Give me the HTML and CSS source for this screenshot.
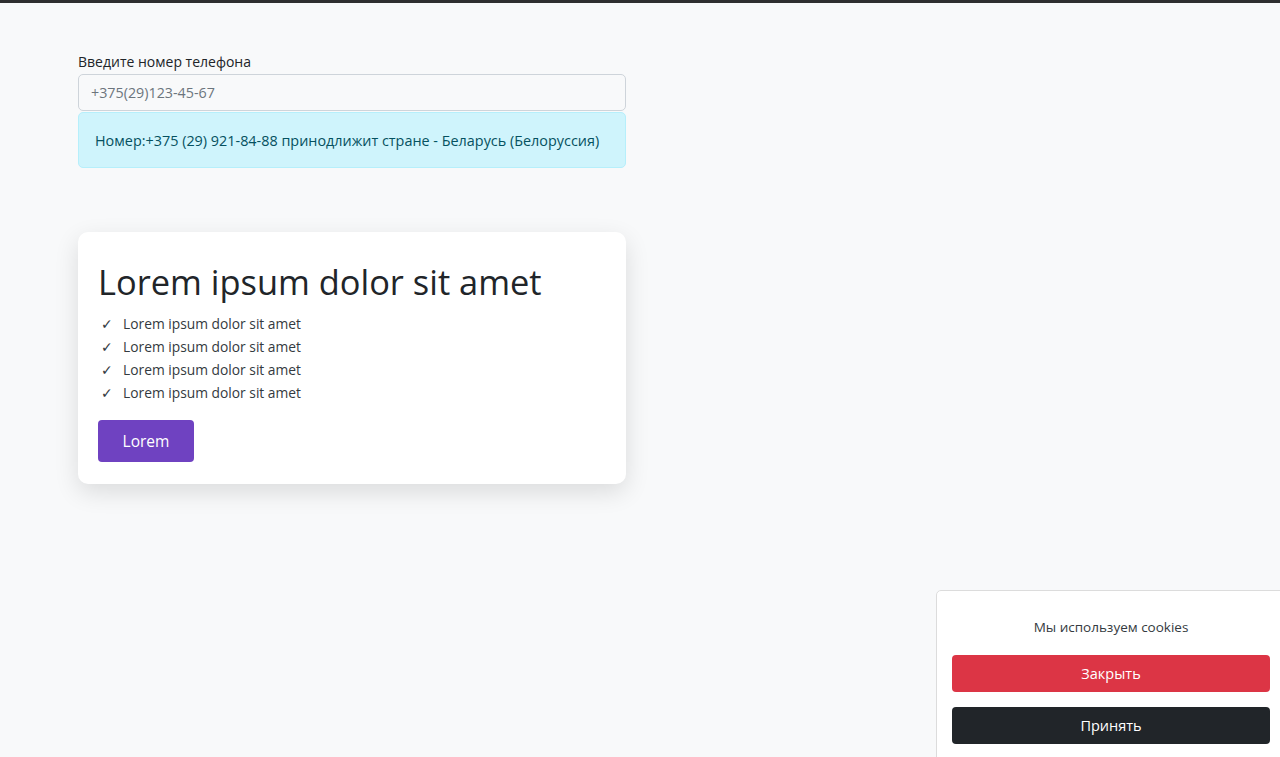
FILE: index.html
```html
<!DOCTYPE html>
<html lang="ru">
<head>
<meta charset="utf-8">
<title>Телефон</title>
<link rel="stylesheet" href="styles.css">
</head>
<body>
<div class="topbar"></div>
<main class="page">
  <section class="phone">
    <label class="label" for="phone">Введите номер телефона</label>
    <input id="phone" class="input" type="text" placeholder="+375(29)123-45-67">
    <div class="alert">Номер:+375 (29) 921-84-88 принодлижит стране - Беларусь (Белоруссия)</div>
  </section>
  <section class="card">
    <h1 class="title">Lorem ipsum dolor sit amet</h1>
    <ul class="list">
      <li><span class="check">✓</span>Lorem ipsum dolor sit amet</li>
      <li><span class="check">✓</span>Lorem ipsum dolor sit amet</li>
      <li><span class="check">✓</span>Lorem ipsum dolor sit amet</li>
      <li><span class="check">✓</span>Lorem ipsum dolor sit amet</li>
    </ul>
    <button class="btn btn-purple">Lorem</button>
  </section>
</main>
<div class="cookie">
  <p class="cookie-text">Мы используем cookies</p>
  <button class="btn btn-block btn-red">Закрыть</button>
  <button class="btn btn-block btn-dark">Принять</button>
</div>
</body>
</html>
```
FILE: styles.css
```css
* { box-sizing: border-box; }
html, body { height: 100%; }
body {
  margin: 0;
  background: #f8f9fa;
  font-family: "Open Sans", "Noto Sans", sans-serif;
  color: #212529;
  overflow: hidden;
}
.topbar { height: 3px; background: #2e2e30; }
.page { padding: 49px 0 0 78px; width: 626px; }
.phone { display: flex; flex-direction: column; }
.label { font-size: 14px; line-height: 20px; color: #212529; margin-bottom: 2px; }
.input {
  height: 37px;
  border: 1px solid #ced4da;
  border-radius: 5px;
  background: #f8f9fa;
  padding: 0 12px;
  font-family: inherit;
  font-size: 14.3px;
  color: #212529;
  outline: none;
}
.input::placeholder { color: #6c757d; }
.alert {
  margin-top: 1px;
  height: 56px;
  display: flex;
  align-items: center;
  padding: 0 16px;
  background: #cff4fc;
  border: 1px solid #b6effb;
  border-radius: 5px;
  color: #055160;
  font-size: 14.4px;
}
.card {
  margin-top: 64px;
  background: #fff;
  border-radius: 10px;
  box-shadow: 0 8px 24px rgba(0,0,0,0.12);
  padding: 28px 20px 22px;
}
.title { margin: 0 0 8px; font-weight: 400; font-size: 34.4px; line-height: 44px; color: #212529; }
.list { list-style: none; margin: 0 0 16px; padding: 0 0 0 3px; }
.list li { display: flex; align-items: center; height: 23px; font-size: 13.8px; color: #343a40; }
.check { width: 22px; font-family: "DejaVu Sans", sans-serif; font-size: 14px; line-height: 1; color: #343a40; }
.btn {
  border: 0;
  border-radius: 4px;
  font-family: inherit;
  color: #fff;
  cursor: pointer;
}
.btn-purple { background: #6f42c1; width: 96px; height: 42px; font-size: 15.5px; }
.cookie {
  position: fixed;
  left: 936px;
  top: 590px;
  right: -10px;
  bottom: -10px;
  background: #fff;
  border: 1px solid #dcdcdc;
  border-radius: 5px 0 0 0;
  padding: 25px 9px 0 15px;
  display: flex;
  flex-direction: column;
  align-items: stretch;
}
.cookie-text { margin: 0 0 17px; text-align: center; font-size: 13.5px; line-height: 22px; color: #343a40; padding-right: 10px; }
.btn-block { height: 37px; font-size: 14.5px; width: 318px; }
.btn-red { background: #dc3545; margin-bottom: 15px; }
.btn-dark { background: #212529; }
```
